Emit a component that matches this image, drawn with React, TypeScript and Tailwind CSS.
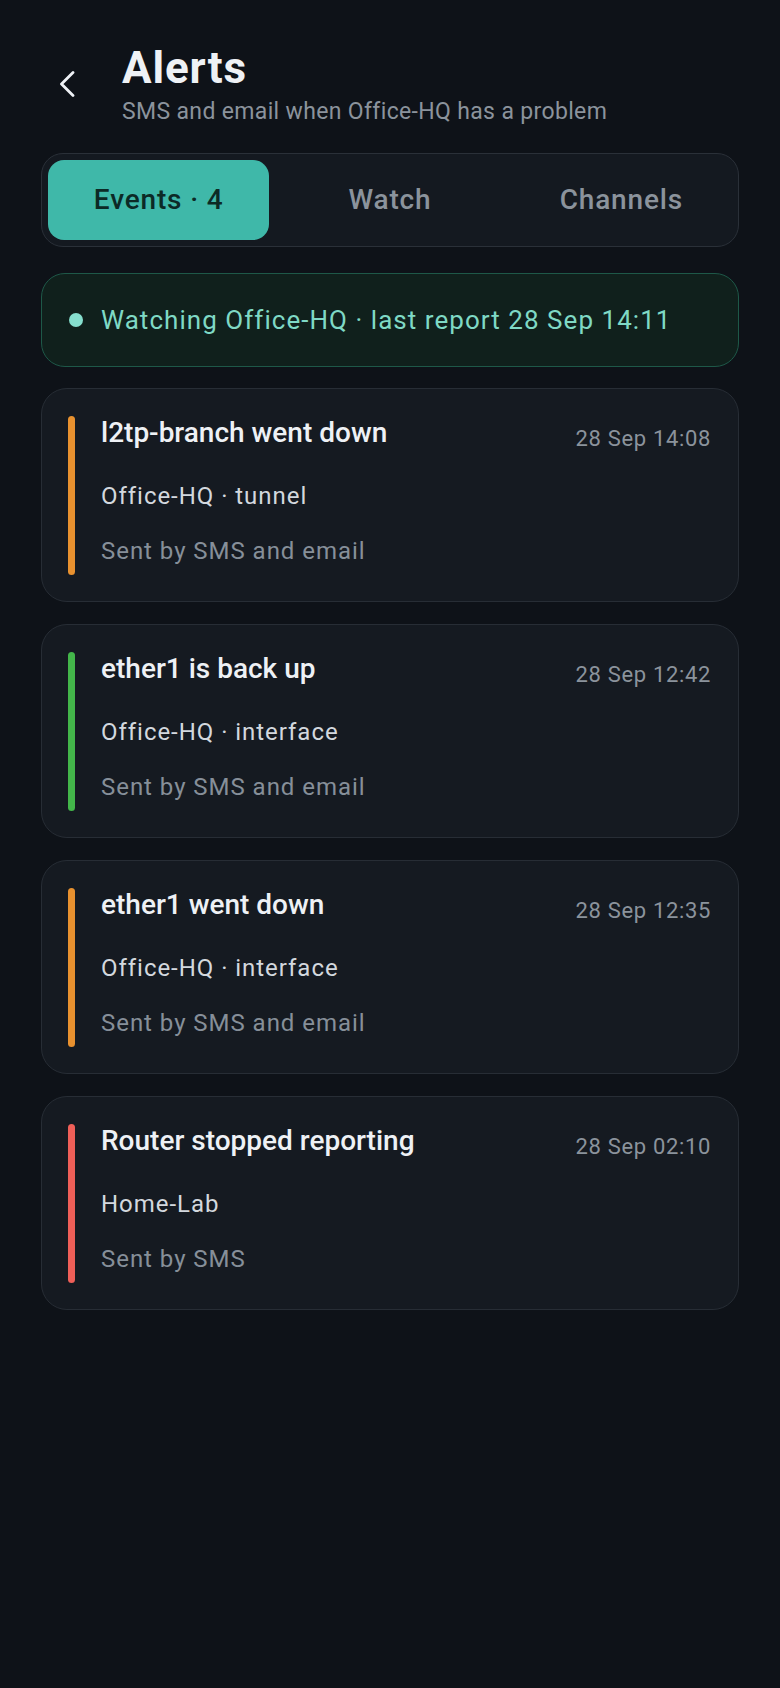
const events = [
  {
    title: "l2tp-branch went down",
    time: "28 Sep 14:08",
    source: "Office-HQ · tunnel",
    sent: "Sent by SMS and email",
    accent: "bg-[#e8912f]",
  },
  {
    title: "ether1 is back up",
    time: "28 Sep 12:42",
    source: "Office-HQ · interface",
    sent: "Sent by SMS and email",
    accent: "bg-[#43b64a]",
  },
  {
    title: "ether1 went down",
    time: "28 Sep 12:35",
    source: "Office-HQ · interface",
    sent: "Sent by SMS and email",
    accent: "bg-[#e8912f]",
  },
  {
    title: "Router stopped reporting",
    time: "28 Sep 02:10",
    source: "Home-Lab",
    sent: "Sent by SMS",
    accent: "bg-[#ef5f58]",
  },
];

function EventCard({ e }: { e: (typeof events)[number] }) {
  return (
    <div className="flex gap-[26px] rounded-[26px] border border-[#272d35] bg-[#151a21] pl-[26px] pr-[27px] pt-[27px] pb-[26px]">
      <div className={`w-[7px] shrink-0 rounded-full ${e.accent}`} />
      <div className="flex flex-1 flex-col pb-[9px]">
        <div className="flex items-start justify-between">
          <div className="text-[28px] leading-[34px] font-medium text-[#eef1f5]">{e.title}</div>
          <div className="mt-[9px] text-[22px] leading-[28px] tracking-[0.03em] text-[#8b939c]">{e.time}</div>
        </div>
        <div className="mt-[28px] text-[24px] leading-[30px] tracking-[0.04em] text-[#d3d8de]">{e.source}</div>
        <div className="mt-[25px] text-[24px] leading-[30px] tracking-[0.04em] text-[#868f99]">{e.sent}</div>
      </div>
    </div>
  );
}

export default function App() {
  return (
    <div className="min-h-[1688px] bg-[#0e1218] px-[41px] pb-10 font-['Roboto',sans-serif]">
      {/* Header */}
      <div className="flex items-start pt-[42px]">
        <button className="mt-[29px] ml-[18px] mr-[47px] text-[#eef1f5]">
          <svg width="16" height="26" viewBox="0 0 16 26" fill="none">
            <path d="M14 1.5 L2.5 13 L14 24.5" stroke="currentColor" strokeWidth="2.8" strokeLinecap="round" strokeLinejoin="round" />
          </svg>
        </button>
        <div>
          <h1 className="text-[44px] leading-[52px] font-bold tracking-[0.02em] text-[#eef1f5]">Alerts</h1>
          <p className="mt-[4px] text-[23px] leading-[28px] tracking-[0.015em] text-[#8b939c]">
            SMS and email when Office-HQ has a problem
          </p>
        </div>
      </div>

      {/* Tabs */}
      <div className="mt-[27px] grid grid-cols-3 gap-[10px] rounded-[22px] border border-[#2a3038] bg-[#141920] p-[6px]">
        <button className="h-[80px] rounded-[16px] bg-[#3fb8a9] text-[28px] font-medium tracking-[0.03em] text-[#0c2a26]">
          Events · 4
        </button>
        <button className="h-[80px] rounded-[16px] text-[28px] font-medium tracking-[0.03em] text-[#8b939c]">Watch</button>
        <button className="h-[80px] rounded-[16px] text-[28px] font-medium tracking-[0.03em] text-[#8b939c]">Channels</button>
      </div>

      {/* Status */}
      <div className="mt-[26px] flex items-center gap-[18px] rounded-[24px] border border-[#1e5848] bg-[#10201c] px-[27px] py-[31px]">
        <span className="h-[14px] w-[14px] shrink-0 rounded-full bg-[#86dfce]" />
        <span className="text-[26px] leading-[30px] tracking-[0.04em] text-[#7fd9c5]">
          Watching Office-HQ · last report 28 Sep 14:11
        </span>
      </div>

      {/* Events */}
      <div className="mt-[21px] flex flex-col gap-[22px]">
        {events.map((e) => (
          <EventCard key={e.title} e={e} />
        ))}
      </div>
    </div>
  );
}
